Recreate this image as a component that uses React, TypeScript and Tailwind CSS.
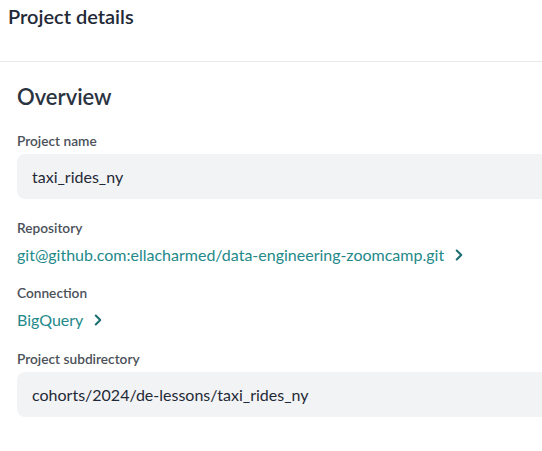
import { ChevronRight } from 'lucide-react'

function Label({ children }: { children: string }) {
  return <div className="text-[13.7px] leading-[18px] font-semibold text-[#4b5159]">{children}</div>
}

function ReadOnlyField({ value }: { value: string }) {
  return (
    <div className="mt-[4px] flex h-[45px] w-[560px] items-center rounded-lg bg-[#f2f3f5] px-[15px] text-[16px] text-[#1f2937]">
      {value}
    </div>
  )
}

function LinkRow({ text }: { text: string }) {
  return (
    <div className="mt-[7px] flex items-center gap-[6px] text-[16px] leading-[22px] text-[#23898a]">
      <span>{text}</span>
      <ChevronRight size={18} strokeWidth={2.75} className="text-[#1d6e73]" />
    </div>
  )
}

export default function App() {
  return (
    <div className="h-[451px] w-[542px] overflow-hidden bg-white font-['Lato','Liberation_Sans',sans-serif]">
      <div className="h-[62px] border-b border-[#e8e9eb] px-[8px] pt-[4px]">
        <h1 className="text-[20px] leading-[24px] font-semibold text-[#1f2937]">Project details</h1>
      </div>
      <div className="pl-[17px] pt-[21px]">
        <h2 className="text-[22px] leading-[28px] font-semibold text-[#2a3441]">Overview</h2>
        <div className="mt-[21px]">
          <Label>Project name</Label>
          <ReadOnlyField value="taxi_rides_ny" />
        </div>
        <div className="mt-[20px]">
          <Label>Repository</Label>
          <LinkRow text="git@github.com:ellacharmed/data-engineering-zoomcamp.git" />
        </div>
        <div className="mt-[18px]">
          <Label>Connection</Label>
          <LinkRow text="BigQuery" />
        </div>
        <div className="mt-[19px]">
          <Label>Project subdirectory</Label>
          <div className="mt-[2px]">
            <ReadOnlyField value="cohorts/2024/de-lessons/taxi_rides_ny" />
          </div>
        </div>
      </div>
    </div>
  )
}
